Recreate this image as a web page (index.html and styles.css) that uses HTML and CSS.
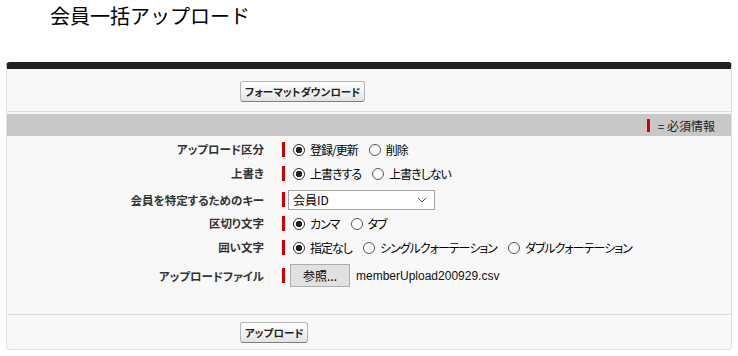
FILE: index.html
```html
<!DOCTYPE html>
<html lang="ja">
<head>
    <meta charset="UTF-8">
    <title>会員一括アップロード</title>
    <link rel="stylesheet" href="styles.css">
</head>
<body>
    <h1 class="page-title">会員一括アップロード</h1>

    <div class="panel">
        <div class="btn-row top-row">
            <button class="btn">フォーマットダウンロード</button>
        </div>

        <div class="section-bar">
            <span class="req-bar"></span>
            <span class="req-note">= 必須情報</span>
        </div>

        <div class="form">
            <div class="row">
                <div class="label">アップロード区分</div>
                <div class="field">
                    <span class="req-bar"></span>
                    <label class="opt"><input type="radio" name="mode" checked>登録/更新</label>
                    <label class="opt"><input type="radio" name="mode">削除</label>
                </div>
            </div>
            <div class="row">
                <div class="label">上書き</div>
                <div class="field">
                    <span class="req-bar"></span>
                    <label class="opt"><input type="radio" name="overwrite" checked>上書きする</label>
                    <label class="opt"><input type="radio" name="overwrite">上書きしない</label>
                </div>
            </div>
            <div class="row row-select">
                <div class="label">会員を特定するためのキー</div>
                <div class="field">
                    <span class="req-bar"></span>
                    <div class="select-wrap">
                        <select class="select">
                            <option>会員ID</option>
                        </select>
                        <svg class="chevron" width="10" height="6" viewBox="0 0 10 6">
                            <path d="M1 1 L5 5 L9 1" fill="none" stroke="#555" stroke-width="1"/>
                        </svg>
                    </div>
                </div>
            </div>
            <div class="row">
                <div class="label">区切り文字</div>
                <div class="field">
                    <span class="req-bar"></span>
                    <label class="opt"><input type="radio" name="sep" checked>カンマ</label>
                    <label class="opt"><input type="radio" name="sep">タブ</label>
                </div>
            </div>
            <div class="row">
                <div class="label">囲い文字</div>
                <div class="field">
                    <span class="req-bar"></span>
                    <label class="opt"><input type="radio" name="quote" checked>指定なし</label>
                    <label class="opt"><input type="radio" name="quote">シングルクォーテーション</label>
                    <label class="opt"><input type="radio" name="quote">ダブルクォーテーション</label>
                </div>
            </div>
            <div class="row row-file">
                <div class="label">アップロードファイル</div>
                <div class="field">
                    <span class="req-bar"></span>
                    <button class="file-btn">参照...</button>
                    <span class="file-name">memberUpload200929.csv</span>
                </div>
            </div>
        </div>

        <div class="btn-row bottom-row">
            <button class="btn">アップロード</button>
        </div>
    </div>
</body>
</html>
```

FILE: styles.css
```css
:root {
    --panel-bg: #f8f8f8;
    --line: #dcdcdc;
    --band: #c8c8c8;
    --required: #c00;
    --text: #333;
}

* {
    margin: 0;
    padding: 0;
    box-sizing: border-box;
}

body {
    font-family: "Noto Sans CJK JP", "Noto Sans", sans-serif;
    color: var(--text);
    background: #fff;
}

.page-title {
    font-size: 20px;
    font-weight: 400;
    line-height: 26px;
    color: #000;
    padding: 3px 0 0 50px;
    height: 30px;
    margin-bottom: 32px;
}

.panel {
    margin: 0 6px;
    background: var(--panel-bg);
    border: 1px solid #e2e2e2;
    border-top: 7px solid #222;
    border-radius: 4px;
    height: 288px;
}

.btn-row {
    display: flex;
    align-items: flex-start;
    padding-left: 233px;
}

.top-row {
    height: 43px;
    padding-top: 12px;
    border-bottom: 1px solid var(--line);
    margin-bottom: 2px;
}

.bottom-row {
    border-top: 1px solid var(--line);
    padding-top: 7px;
}

.btn {
    font-family: inherit;
    font-size: 10.5px;
    font-weight: 700;
    font-feature-settings: "palt";
    color: #222;
    height: 21px;
    padding: 0 4px;
    border: 1px solid #b5b5b5;
    border-bottom-color: #7f7f7f;
    border-radius: 3px;
    background: linear-gradient(#ffffff, #f0f0f0 60%, #e2e2e2);
    cursor: pointer;
}

.section-bar {
    height: 22px;
    background: var(--band);
    display: flex;
    align-items: center;
    justify-content: flex-end;
    padding-right: 16px;
    font-size: 12px;
    color: #222;
}

.section-bar .req-bar {
    margin-right: 8px;
    height: 13px;
}

.req-note {
    white-space: pre;
}

.req-bar {
    display: inline-block;
    width: 3px;
    height: 15px;
    background: var(--required);
    margin-right: 3px;
    flex-shrink: 0;
}

.form {
    padding: 1px 0 25px;
}

.row {
    display: grid;
    grid-template-columns: 263px 1fr;
    height: 24px;
    align-items: center;
}

.row-select {
    height: 26px;
    padding-top: 3px;
}

.row-file {
    height: 29px;
    margin-top: 1px;
    padding-top: 2px;
}

.label {
    text-align: right;
    padding-right: 6px;
    font-size: 11.5px;
    font-weight: 700;
    font-feature-settings: "palt";
    color: #333;
}

.field {
    display: flex;
    align-items: center;
    padding-left: 12px;
    font-size: 12px;
    font-feature-settings: "palt";
    color: #000;
}

.opt {
    display: flex;
    align-items: center;
    margin-right: 6px;
    letter-spacing: -1px;
}

.opt input {
    appearance: none;
    width: 12px;
    height: 12px;
    border: 1px solid #555;
    border-radius: 50%;
    background: #fff;
    margin: 1px 5px 0 5px;
}

.opt input:checked {
    border-color: #333;
    background: radial-gradient(circle, #222 0 3px, #fff 3.5px);
}

.select-wrap {
    position: relative;
}

.select {
    appearance: none;
    width: 147px;
    height: 20px;
    border: 1px solid #a6a6a6;
    background: #fff;
    font-family: inherit;
    font-size: 12px;
    color: #000;
    padding: 0 4px;
    border-radius: 0;
    display: block;
}

.chevron {
    position: absolute;
    right: 8px;
    top: 7px;
    pointer-events: none;
}

.file-btn {
    font-family: inherit;
    font-size: 12px;
    color: #000;
    width: 60px;
    height: 23px;
    margin-left: 2px;
    border: 1px solid #adadad;
    background: #e1e1e1;
    cursor: pointer;
}

.file-name {
    margin-left: 6px;
    font-family: "Liberation Sans", sans-serif;
    font-size: 12px;
    color: #111;
}
```
